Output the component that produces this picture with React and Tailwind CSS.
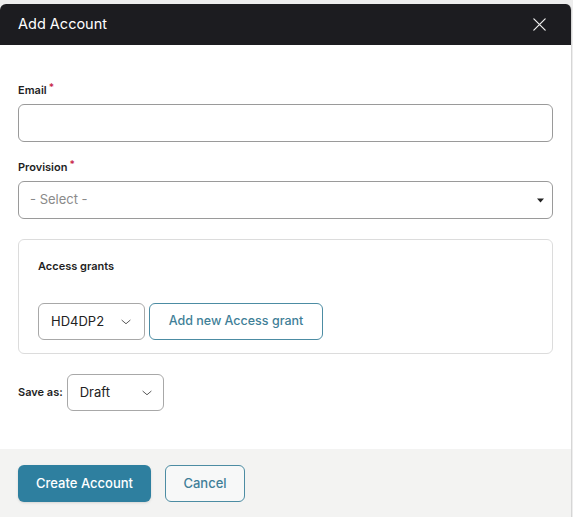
import React from "react";

const font = { fontFamily: "Inter, 'Noto Sans', sans-serif" };

function Chevron({ className = "" }) {
  return (
    <svg viewBox="0 0 24 24" className={className} fill="none" stroke="currentColor" strokeWidth="1.5" strokeLinecap="round" strokeLinejoin="round">
      <path d="M5 9l7 6 7-6" />
    </svg>
  );
}

export default function App() {
  return (
    <div className="w-[573px] h-[517px] bg-[#ededed] pt-[4px] overflow-hidden" style={font}>
      <div className="w-[572px] h-[513px] flex flex-col bg-white rounded-t-[6px] border-r border-[#d6d6d6] overflow-hidden">
        <div className="h-[41px] shrink-0 bg-[#1c1c20] flex items-center justify-between pl-[18px] pr-[23px]">
          <span className="text-white text-[14.5px] leading-none">Add Account</span>
          <svg viewBox="0 0 24 24" className="w-[17px] h-[17px] text-[#e8e8e8]" fill="none" stroke="currentColor" strokeWidth="1.8" strokeLinecap="round">
            <path d="M4 4l16 16M20 4L4 20" />
          </svg>
        </div>
        <div className="flex-1 pl-[18px] pr-[18px] pt-[37px]">
          <div className="text-[11px] leading-[16px] font-semibold text-[#1f1f1f]">
            Email<span className="text-[#c8294a] ml-[2px] relative -top-[3px] text-[10px]">*</span>
          </div>
          <div className="mt-[6px] h-[38px] rounded-[6px] border border-[#9a9a9a]" />
          <div className="mt-[17px] text-[11px] leading-[16px] font-semibold text-[#1f1f1f]">
            Provision<span className="text-[#c8294a] ml-[2px] relative -top-[3px] text-[10px]">*</span>
          </div>
          <div className="mt-[6px] h-[38px] rounded-[6px] border border-[#9a9a9a] flex items-center justify-between pl-[11px] pr-[8px]">
            <span className="text-[13px] text-[#8a8a8a]">- Select -</span>
            <svg viewBox="0 0 10 6" className="w-[7px] h-[5px] text-[#222]"><path d="M0 0h10L5 6z" fill="currentColor" /></svg>
          </div>
          <div className="mt-[20px] h-[115px] rounded-[6px] border border-[#dcdcdc] pl-[19px] pt-[18px]">
            <div className="text-[11px] leading-[16px] font-semibold text-[#1f1f1f]">Access grants</div>
            <div className="mt-[29px] flex gap-[4px]">
              <div className="w-[107px] h-[37px] rounded-[6px] border border-[#a8a8a8] flex items-center justify-between pl-[12px] pr-[11px]">
                <span className="text-[13px] text-[#222]">HD4DP2</span>
                <Chevron className="w-[14px] h-[14px] text-[#444]" />
              </div>
              <div className="w-[174px] h-[37px] rounded-[6px] border-[1.5px] border-[#4c8ca3] flex items-center justify-center">
                <span className="text-[12.5px] font-medium text-[#3f7f98]">Add new Access grant</span>
              </div>
            </div>
          </div>
          <div className="mt-[20px] flex items-center gap-[4px]">
            <span className="text-[11px] font-semibold text-[#1f1f1f]">Save as:</span>
            <div className="w-[97px] h-[37px] rounded-[6px] border border-[#a8a8a8] flex items-center justify-between pl-[12px] pr-[9px]">
              <span className="text-[13px] text-[#222]">Draft</span>
              <Chevron className="w-[14px] h-[14px] text-[#444]" />
            </div>
          </div>
        </div>
        <div className="h-[68px] shrink-0 bg-[#f3f3f2] flex items-start gap-[14px] pl-[18px] pt-[16px]">
          <div className="w-[133px] h-[37px] rounded-[6px] bg-[#2e7f9f] flex items-center justify-center shadow-sm">
            <span className="text-white text-[13px] font-medium">Create Account</span>
          </div>
          <div className="w-[80px] h-[37px] rounded-[6px] border-[1.5px] border-[#4c8ca3] bg-[#f7f8f8] flex items-center justify-center">
            <span className="text-[#3f7f98] text-[13px] font-medium">Cancel</span>
          </div>
        </div>
      </div>
    </div>
  );
}
